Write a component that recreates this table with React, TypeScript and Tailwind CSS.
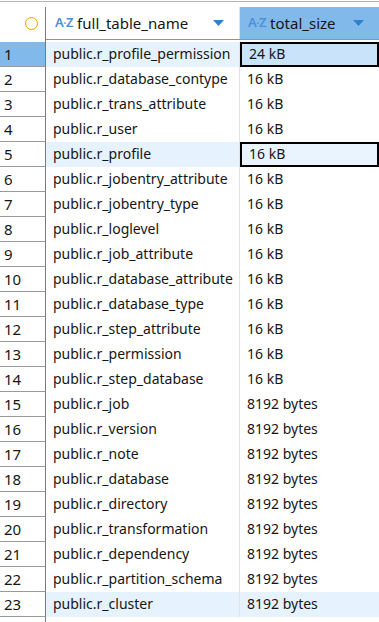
import React from "react";

const rows: [string, string][] = [
  ["public.r_profile_permission", "24 kB"],
  ["public.r_database_contype", "16 kB"],
  ["public.r_trans_attribute", "16 kB"],
  ["public.r_user", "16 kB"],
  ["public.r_profile", "16 kB"],
  ["public.r_jobentry_attribute", "16 kB"],
  ["public.r_jobentry_type", "16 kB"],
  ["public.r_loglevel", "16 kB"],
  ["public.r_job_attribute", "16 kB"],
  ["public.r_database_attribute", "16 kB"],
  ["public.r_database_type", "16 kB"],
  ["public.r_step_attribute", "16 kB"],
  ["public.r_permission", "16 kB"],
  ["public.r_step_database", "16 kB"],
  ["public.r_job", "8192 bytes"],
  ["public.r_version", "8192 bytes"],
  ["public.r_note", "8192 bytes"],
  ["public.r_database", "8192 bytes"],
  ["public.r_directory", "8192 bytes"],
  ["public.r_transformation", "8192 bytes"],
  ["public.r_dependency", "8192 bytes"],
  ["public.r_partition_schema", "8192 bytes"],
  ["public.r_cluster", "8192 bytes"],
];

function AZ() {
  return (
    <span className="text-[13px] font-semibold text-[#4a90d9] tracking-[-0.3px] mr-[4px]">
      A<span className="text-[10px] align-middle">·</span>Z
    </span>
  );
}

function Tri() {
  return (
    <svg width="11" height="6" viewBox="0 0 11 6">
      <polygon points="0,0 11,0 5.5,6" fill="#2f80d0" />
    </svg>
  );
}

export default function App() {
  return (
    <div
      className="w-[379px] h-[622px] overflow-hidden bg-white text-[#161616]"
      style={{ fontFamily: '"Noto Sans", "Open Sans", sans-serif' }}
    >
      {/* header */}
      <div className="h-[1px]" />
      <div className="h-[1px] bg-[#b4b4b4]" />
      <div className="h-[5px]" />
      <div className="flex h-[32px] text-[15px]">
        <div className="w-[46px] shrink-0 border-r border-[#7a7a7a] flex items-center justify-end pr-[7px]">
          <div className="w-[13px] h-[13px] rounded-full border-[1.5px] border-[#f39a1e]" />
        </div>
        <div className="w-[194px] shrink-0 border-r border-[#e2e2e2] flex items-center pl-[9px] pr-[15px]">
          <AZ />
          <span className="flex-1">full_table_name</span>
          <Tri />
        </div>
        <div className="flex-1 bg-[#80b9ea] flex items-center pl-[8px] pr-[15px]">
          <AZ />
          <span className="flex-1">total_size</span>
          <Tri />
        </div>
      </div>
      <div className="flex h-[2px]">
        <div className="w-[46px] shrink-0 border-r border-[#7a7a7a]" />
        <div className="flex-1 h-[1px] bg-[#e8735a]" />
      </div>
      <div className="flex h-[1px]">
        <div className="w-[46px] shrink-0 border-r border-[#7a7a7a]" />
      </div>
      {/* rows */}
      {rows.map(([name, size], i) => {
        const n = i + 1;
        const selected = n === 1;
        const hl = n === 1 || n === 5 || n === 23;
        const focus = n === 1 || n === 5;
        return (
          <div key={n} className="flex h-[25px] text-[14px] leading-[24px]">
            <div
              className={`w-[46px] shrink-0 border-r border-b border-r-[#7a7a7a] border-b-[#9a9a9a] pl-[4px] text-[15px] ${
                selected ? "bg-[#80b9ea]" : ""
              }`}
            >
              {n}
            </div>
            <div
              className={`w-[194px] shrink-0 border-r border-[#e2e2e2] pl-[7px] whitespace-nowrap overflow-hidden ${
                hl ? "bg-[#e6f2fd]" : ""
              }`}
            >
              {name}
            </div>
            <div
              className={`flex-1 pl-[7px] whitespace-nowrap ${
                focus
                  ? `border-2 border-black leading-[20px] pl-[5px] ${selected ? "bg-[#c9e3fa]" : "bg-[#eaf4fe]"}`
                  : hl
                  ? "bg-[#e6f2fd]"
                  : ""
              }`}
            >
              {size}
            </div>
          </div>
        );
      })}
      <div className="flex h-[20px]">
        <div className="w-[46px] shrink-0 border-r border-[#7a7a7a]" />
      </div>
    </div>
  );
}
